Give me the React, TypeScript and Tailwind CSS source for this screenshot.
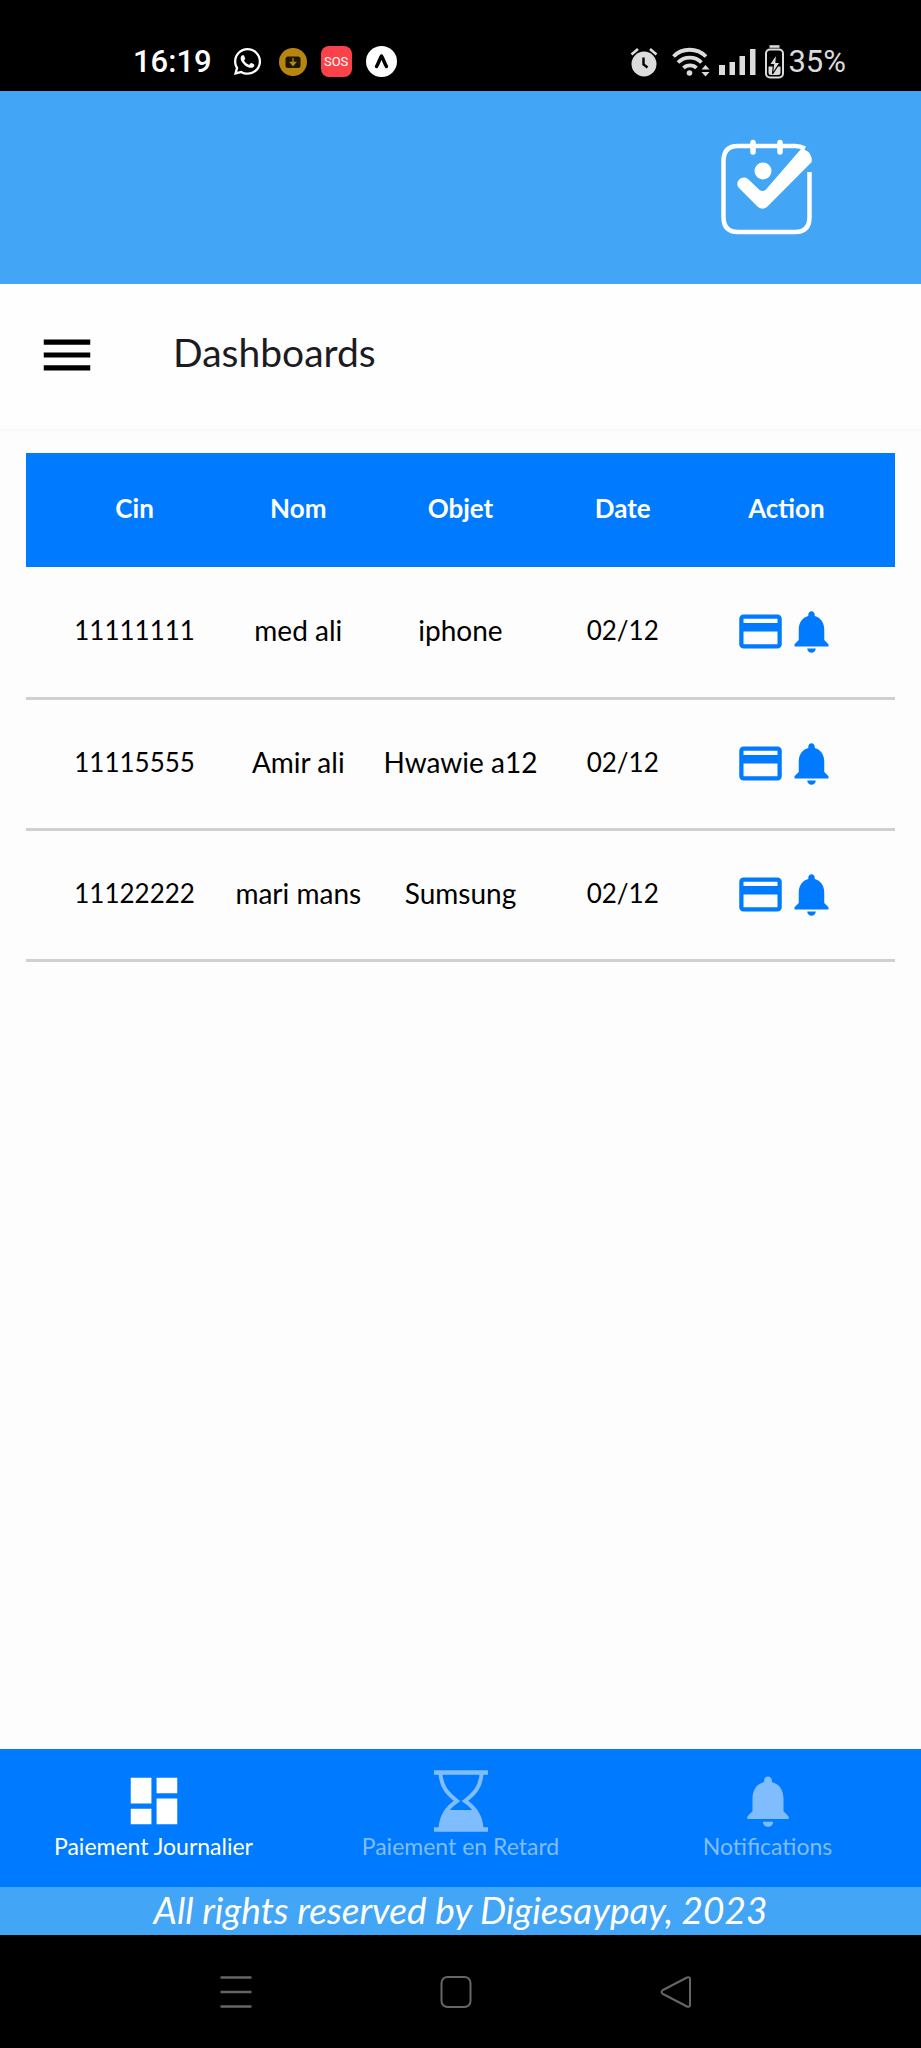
import { MdCreditCard, MdDashboard, MdMenu, MdNotifications } from "react-icons/md";
import { FaWhatsapp } from "react-icons/fa";

const rows = [
  { cin: "11111111", nom: "med ali", objet: "iphone", date: "02/12" },
  { cin: "11115555", nom: "Amir ali", objet: "Hwawie a12", date: "02/12" },
  { cin: "11122222", nom: "mari mans", objet: "Sumsung", date: "02/12" },
];

function StatusBar() {
  return (
    <div className="flex h-[91px] items-center justify-between bg-black pt-[33px] pr-[75px] pb-px pl-[133px] font-[Roboto,sans-serif] text-[31px] leading-none text-white">
      <div className="flex items-center">
        <span className="font-medium">16:19</span>
        <FaWhatsapp className="ml-5 size-[31px]" />
        <svg viewBox="0 0 28 28" className="ml-4 size-7">
          <circle cx="14" cy="14" r="14" fill="#b8860f" />
          <rect x="6.500" y="8.500" width="15" height="11.500" rx="2.500" fill="#1c1606" />
          <path d="M14 10v5M11.500 14.500h5L14 17.500z" stroke="#b8860f" strokeWidth="1.300" fill="#b8860f" />
        </svg>
        <span className="ml-3.5 flex size-[31px] items-center justify-center rounded-lg bg-[#fb4248] text-[13px] text-white">
          SOS
        </span>
        <svg viewBox="0 0 31 31" className="ml-3.5 size-[31px]">
          <circle cx="15.500" cy="15.500" r="15.500" fill="#fff" />
          <path d="M10.500 20.500c2-3 3-7.500 5-10.500 2 3 3 7.500 5 10.500" fill="none" stroke="#000" strokeWidth="3.400" strokeLinecap="round" strokeLinejoin="round" />
        </svg>
      </div>
      <div className="flex items-center text-[#dcdcdc]">
        <svg viewBox="0 0 28 30" className="h-[30px] w-7" fill="none" stroke="currentColor">
          <circle cx="14" cy="17" r="12.500" fill="currentColor" stroke="none" />
          <path d="M1.500 7.500L8 2M26.500 7.500L20 2" strokeWidth="2.600" />
          <path d="M13.500 10.500v7l4 3" stroke="#000" strokeWidth="2.400" />
        </svg>
        <svg viewBox="0 0 38 30" className="ml-3.5 h-[30px] w-[38px]" fill="none" stroke="currentColor" strokeWidth="3.800">
          <path d="M1.500 9.500C10 .5 25 .5 34 9.500M6 15.500c6.500-6.500 17-6.500 23.500 0M11.500 21c3.500-3.500 9.500-3.500 13 0" />
          <circle cx="17.500" cy="26" r="2.800" fill="currentColor" stroke="none" />
          <path d="M29.500 22.500l4-4.500 4 4.500zM29.500 25l4 4.500 4-4.500z" fill="currentColor" stroke="none" />
        </svg>
        <svg viewBox="0 0 37 26" className="ml-[9px] h-[26px] w-[37px]" fill="currentColor">
          <rect x="0" y="16" width="6" height="10" />
          <rect x="10.500" y="13" width="5.500" height="13" />
          <rect x="20.500" y="7" width="5.500" height="19" />
          <rect x="31" y="0" width="5.500" height="26" />
        </svg>
        <svg viewBox="0 0 19 34" className="ml-[9px] h-[34px] w-[19px]" fill="none" stroke="currentColor" strokeWidth="2">
          <path d="M4.500 1.500h10" strokeWidth="2.600" />
          <rect x="1" y="4.500" width="17" height="28" rx="4" />
          <path d="M3.500 21.500h12v6a2.500 2.500 0 0 1-2.500 2.500H6a2.500 2.500 0 0 1-2.500-2.500z" fill="currentColor" stroke="none" />
          <path d="M11.500 9L4.500 19.500h4L7.500 29l7.500-11.500h-4z" fill="currentColor" stroke="#000" strokeWidth="1.200" />
        </svg>
        <span className="ml-1">35%</span>
      </div>
    </div>
  );
}

function Logo() {
  return (
    <svg viewBox="0 0 92 98" className="h-[98px] w-[92px]" role="img" aria-label="Logo" fill="none" stroke="#fff">
      <path d="M84 9.500Q79 7 74 7H17Q2.500 7 2.500 22V78Q2.500 93 17 93H74Q88.500 93 88.500 78V33" strokeWidth="4.500" />
      <path d="M32 3.500V13M59 3.500V13" strokeWidth="5.500" strokeLinecap="round" />
      <circle cx="42" cy="32" r="8.500" fill="#fff" stroke="none" />
      <path d="M24 38.500a6.500 6.500 0 0 0-6.500 10L37 68q4.500 3.500 9 0L90.700 23V19Q89 11 80 10L44.500 51q-3 2-6 0L27 40Q25.500 38.500 24 38.500z" fill="#fff" stroke="none" />
    </svg>
  );
}

function Hourglass() {
  return (
    <svg viewBox="0 0 54 62" className="h-[62px] w-[54px]" fill="none" stroke="currentColor">
      <path d="M0 2.500h54M0 59.500h54" strokeWidth="4.500" />
      <path d="M6.500 3C7 17 14 24 23 31 14 37 7 45 6.500 59M47.500 3C47 17 40 24 31 31 40 37 47 45 47.500 59" strokeWidth="4" />
      <path d="M12 40h30q5 8 5.500 19h-41Q7 48 12 40z" fill="currentColor" stroke="none" />
    </svg>
  );
}

export default function App() {
  return (
    <div className="flex min-h-screen flex-col bg-[#fdfdfd] font-[Lato,sans-serif]">
      <StatusBar />
      <header className="flex h-[193px] items-start justify-end bg-[#42a5f5] pt-12 pr-[108px]">
        <Logo />
      </header>
      <div className="flex h-[147px] items-center border-b-2 border-[#f9f9f9] bg-[#fefefe] pb-1 pl-9">
        <button type="button" aria-label="Menu" className="text-black">
          <MdMenu className="size-[62px]" />
        </button>
        <h1 className="ml-[75px] pb-1 text-[39px] leading-none text-[#1c1b1f]">Dashboards</h1>
      </div>
      <main className="flex-1 px-[26px] pt-[22px]">
        <table className="w-full table-fixed border-collapse text-center text-[28px] leading-none text-black">
          <colgroup>
            <col className="w-[22%]" />
            <col />
            <col />
            <col />
            <col className="w-[22%]" />
          </colgroup>
          <thead>
            <tr className="h-[114px] bg-[#007aff] text-[26px] text-white">
              <th className="pb-1 pl-[26px]">Cin</th>
              <th className="pb-1">Nom</th>
              <th className="pb-1">Objet</th>
              <th className="pb-1">Date</th>
              <th className="pr-[26px] pb-1">Action</th>
            </tr>
          </thead>
          <tbody>
            {rows.map((r) => (
              <tr key={r.cin} className="h-[131px] border-b-3 border-[#d0d0d0]">
                <td className="pb-1 pl-[26px] text-[26px]">{r.cin}</td>
                <td className="pb-1 whitespace-nowrap">{r.nom}</td>
                <td className="pb-1 whitespace-nowrap">{r.objet}</td>
                <td className="pb-1 text-[26px]">{r.date}</td>
                <td className="pr-[26px]">
                  <div className="flex justify-center text-[#007aff]">
                    <button type="button" aria-label="Paiement">
                      <MdCreditCard className="size-[51px]" />
                    </button>
                    <button type="button" aria-label="Notifier">
                      <MdNotifications className="size-[51px]" />
                    </button>
                  </div>
                </td>
              </tr>
            ))}
          </tbody>
        </table>
      </main>
      <nav className="grid h-[138px] grid-cols-3 bg-[#007aff] pt-[21px] text-[23px] leading-7 text-[#80bdff]">
        <a href="#journalier" className="flex flex-col items-center text-white">
          <MdDashboard className="size-[62px]" />
          Paiement Journalier
        </a>
        <a href="#retard" className="flex flex-col items-center">
          <Hourglass />
          Paiement en Retard
        </a>
        <a href="#notifications" className="flex flex-col items-center">
          <MdNotifications className="size-[62px]" />
          Notifications
        </a>
      </nav>
      <footer className="h-12 bg-[#42a5f5] text-center text-[37px] leading-[46px] text-white italic">
        All rights reserved by Digiesaypay, 2023
      </footer>
      <div className="flex h-[113px] items-center justify-center gap-[188px] bg-black pr-[9px] text-[#666]">
        <button type="button" aria-label="Recents">
          <svg viewBox="0 0 32 32" className="size-8" fill="none" stroke="currentColor" strokeWidth="2.500">
            <path d="M.5 1.500h31M.5 16h31M.5 30.500h31" />
          </svg>
        </button>
        <button type="button" aria-label="Home">
          <svg viewBox="0 0 32 32" className="size-8" fill="none" stroke="currentColor" strokeWidth="2">
            <rect x="1.500" y="1" width="29" height="30" rx="6" />
          </svg>
        </button>
        <button type="button" aria-label="Back">
          <svg viewBox="0 0 32 32" className="size-8" fill="none" stroke="currentColor" strokeWidth="2" strokeLinejoin="round">
            <path d="M30 3v26q0 2.500-3 1.500L3 18q-3-2 0-4L27 1.500q3-1 3 1.500z" />
          </svg>
        </button>
      </div>
    </div>
  );
}
